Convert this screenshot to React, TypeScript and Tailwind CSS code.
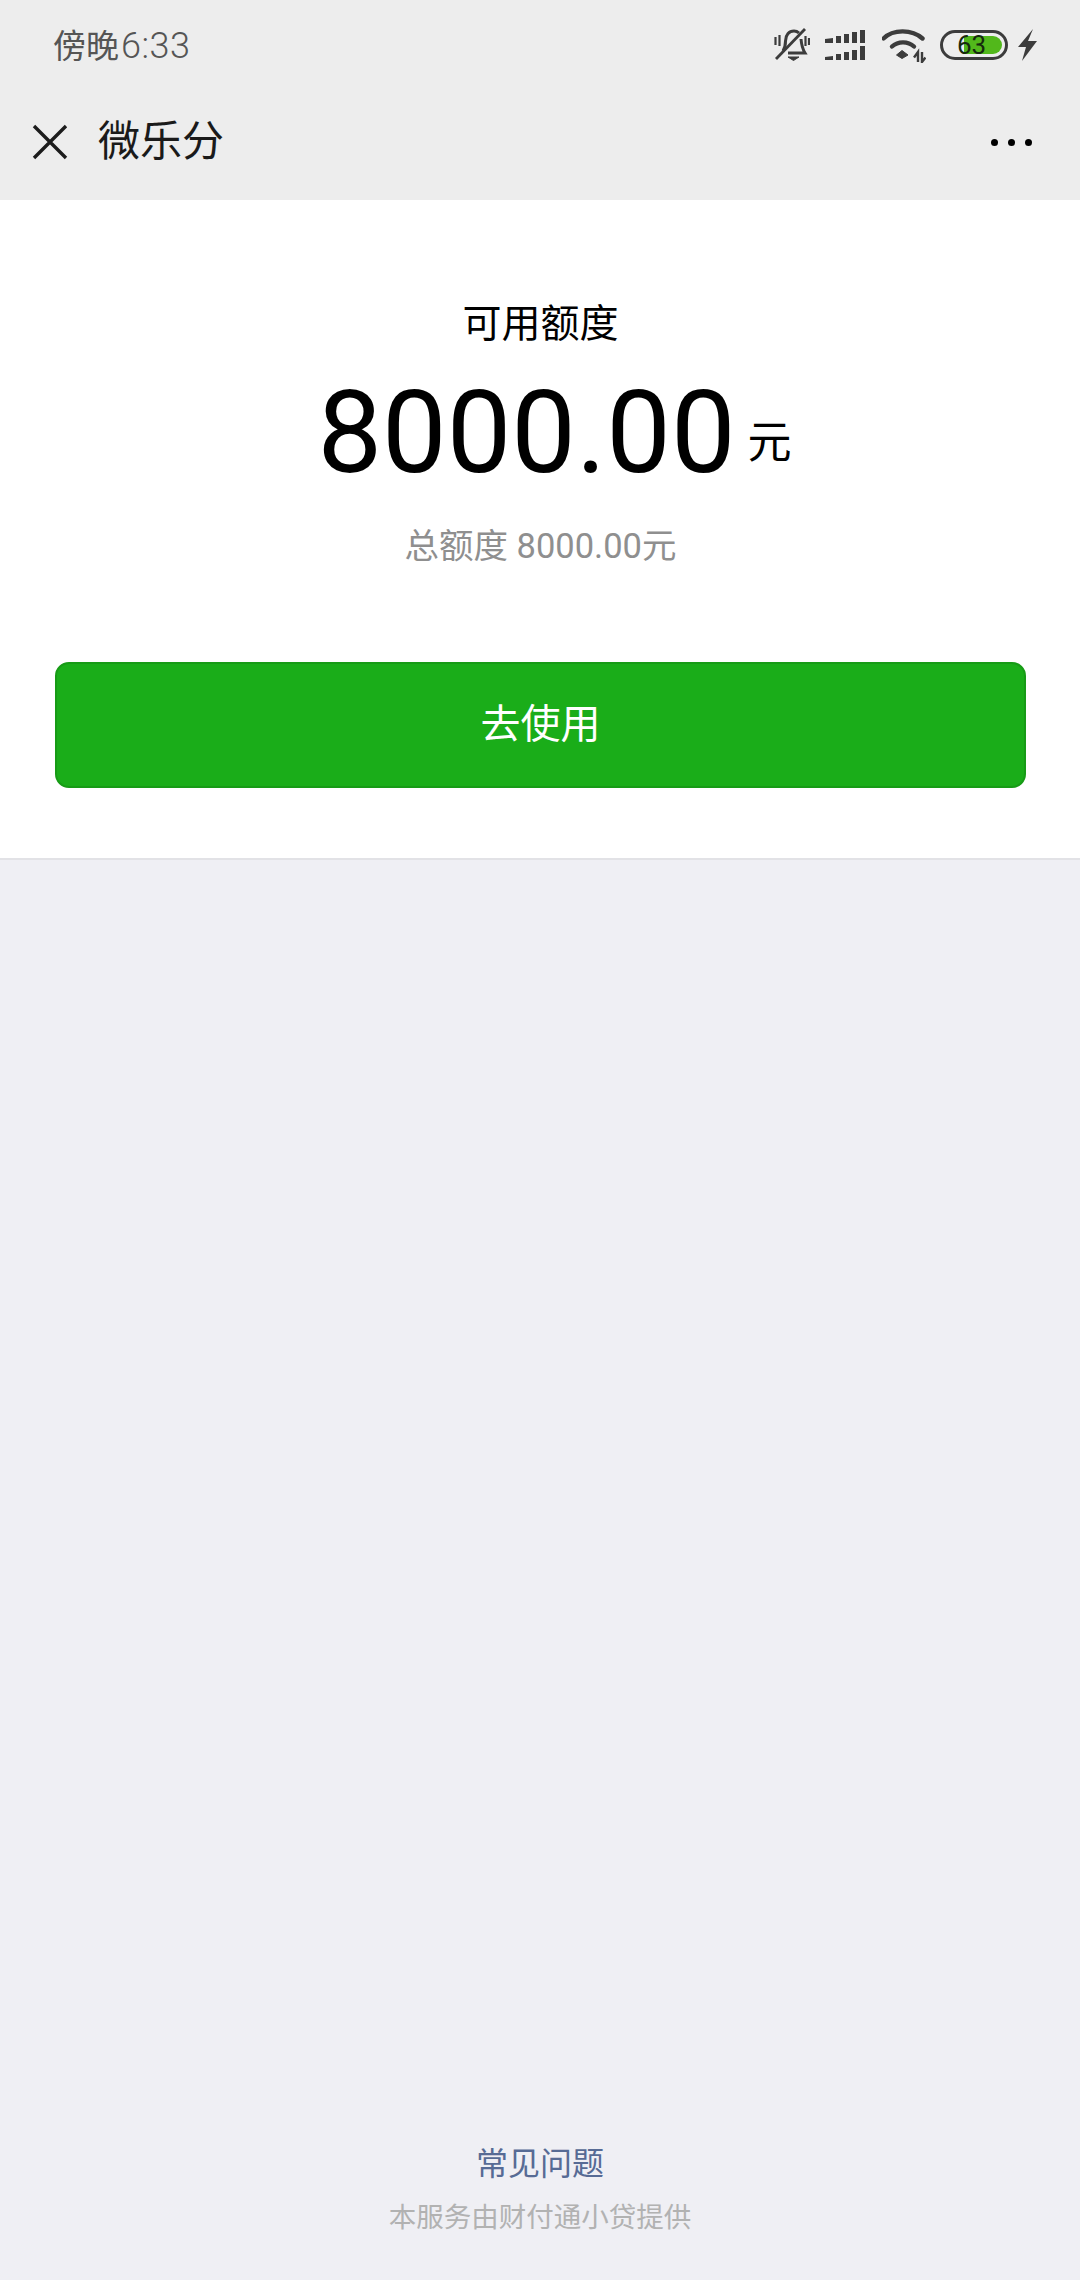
import React from "react";

const cjk = "font-['Roboto','Noto_Sans_CJK_SC',sans-serif]";

function StatusIcons() {
  return (
    <div className="flex items-center pt-[2px]">
      <svg width="36" height="36" viewBox="0 0 36 36" fill="none" stroke="#3c3c3c" className="mr-[15px]">
        <path d="M9 24 C11.5 20 11.5 17 11.5 14 C11.5 8 15 4 20 4 C22 4 23.5 4.6 25 6" strokeWidth="3" />
        <path d="M27 12 C27.5 18 28 21 31 26 L14 26" strokeWidth="3" />
        <path d="M2 32 L31 2" strokeWidth="2.8" />
        <path d="M14 30 H25 L19.5 33.5 Z" fill="#3c3c3c" strokeWidth="1" />
        <path d="M1.5 10 V18 M5.5 8 V19 M31.5 9 V19 M35 11 V18" strokeWidth="2.2" />
      </svg>
      <svg width="42" height="32" viewBox="0 0 42 32" fill="#3c3c3c" className="mr-[15px]">
        <path d="M0 10 L8 9 V14 H0 Z M11 7 H16 V14 H11 Z M19 5 H24 V14 H19 Z M27 3 H32 V14 H27 Z M35 1 H40 V14 H35 Z" />
        <path d="M0 28 L8 27 V31 H0 Z M11 25 H16 V31 H11 Z M19 23 H24 V31 H19 Z M27 21 H32 V31 H27 Z M35 17 H40 V31 H35 Z" />
      </svg>
      <svg width="44" height="35" viewBox="0 0 44 35" fill="none" stroke="#3c3c3c" className="mr-[14px]">
        <path d="M1.5 10.5 C11 1 30 1 40.5 10.5" strokeWidth="4.4" strokeLinecap="round" />
        <path d="M10 18.5 C16 13 26 13 32 18.5" strokeWidth="4.4" strokeLinecap="round" />
        <path d="M20 22.5 L26 27 L20 30.5 L14.5 27 Z" fill="#3c3c3c" strokeWidth="1" />
        <path d="M36 34 V24 L32 29.5 M40 24 V34 L43.5 29.5" strokeWidth="2.4" />
      </svg>
      <div className="relative mr-[10px] h-[30px] w-[68px] rounded-[15px] border-[3px] border-[#3c3c3c] bg-transparent">
        <div className="absolute bottom-[3px] right-[3px] top-[3px] w-[38px] rounded-r-[10px] bg-[#52b81b]" />
        <span className="absolute inset-0 flex items-center justify-center pr-[5px] font-['Roboto',sans-serif] text-[26px] leading-none text-[#16290f]">63</span>
      </div>
      <svg width="20" height="32" viewBox="0 0 20 32" fill="#3c3c3c">
        <path d="M15 0 L0 18 H8 L4 32 L19 12 H10 Z" />
      </svg>
    </div>
  );
}

export default function App() {
  return (
    <div className={`flex h-[2280px] w-[1080px] flex-col bg-[#efeff4] ${cjk}`}>
      <header className="h-[200px] bg-[#ededed]">
        <div className="flex h-[88px] items-center justify-between pl-[53px] pr-[42px]">
          <span className="flex items-baseline pt-[3px] leading-none text-[#555]">
            <span className="text-[33px]">傍晚</span>
            <span className="ml-[2px] text-[36px] font-light tracking-[0.5px]">6:33</span>
          </span>
          <StatusIcons />
        </div>
        <div className="flex h-[112px] items-center justify-between pb-[4px] pl-[32px] pr-[48px]">
          <div className="flex items-center gap-[30px]">
            <svg width="36" height="36" viewBox="0 0 36 36" stroke="#1c1c1c" strokeWidth="3.4" fill="none">
              <path d="M2 2 L34 34 M34 2 L2 34" />
            </svg>
            <span className="text-[42px] leading-none text-[#1a1a1a]">微乐分</span>
          </div>
          <div className="flex items-center gap-[10px]">
            <span className="h-[7px] w-[7px] rounded-full bg-black" />
            <span className="h-[7px] w-[7px] rounded-full bg-black" />
            <span className="h-[7px] w-[7px] rounded-full bg-black" />
          </div>
        </div>
      </header>

      <section className="flex h-[660px] flex-col items-center border-b-2 border-[#e2e2e6] bg-white pl-[55px] pr-[54px] pt-[101px]">
        <p className="text-[39px] leading-[46px] text-black">可用额度</p>
        <div className="mt-[21px] flex items-baseline pl-[28px]">
          <span className="text-[115px] leading-[130px] text-black">8000.00</span>
          <span className="ml-[12px] -translate-y-[14px] text-[44px] leading-none text-black">元</span>
        </div>
        <p className="mt-[26px] text-[34.5px] leading-[44px] text-[#8f8f8f]">总额度 8000.00元</p>
        <button className="mt-[94px] flex h-[126px] w-full items-center justify-center rounded-[14px] border-2 border-[#179b16] bg-[#1aad19] text-[40px] text-white">
          去使用
        </button>
      </section>

      <div className="flex-1" />

      <footer className="flex flex-col items-center pb-[42px]">
        <a className="text-[32px] leading-[44px] text-[#576b95]">常见问题</a>
        <p className="mt-[12px] text-[27.5px] leading-[40px] text-[#b2b2b2]">本服务由财付通小贷提供</p>
      </footer>
    </div>
  );
}
